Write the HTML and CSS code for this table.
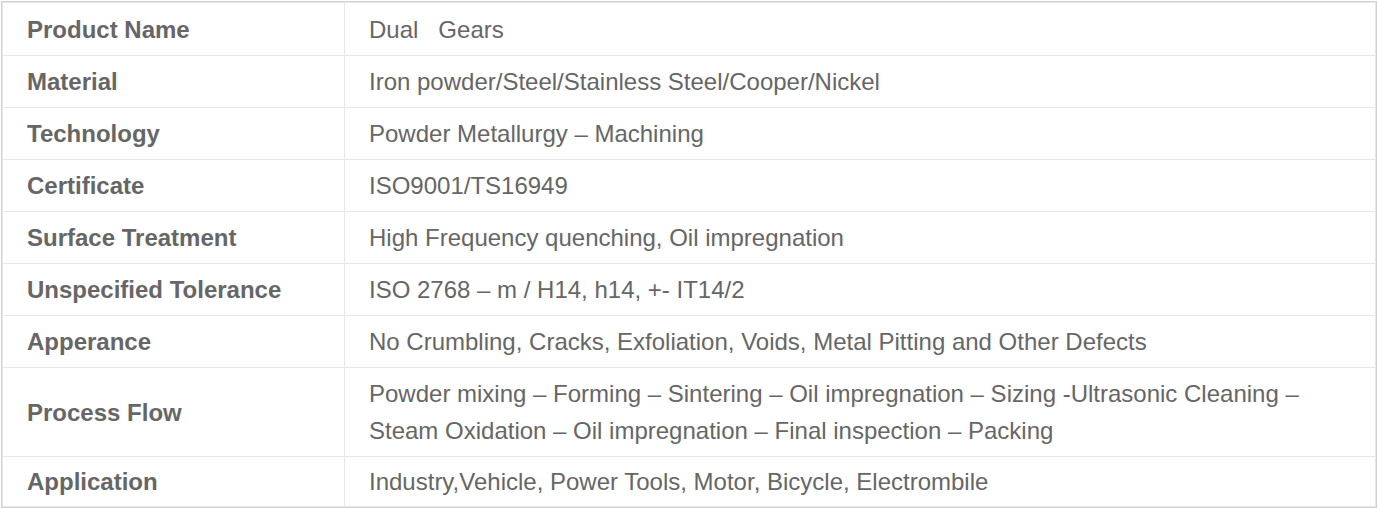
FILE: index.html
```html
<!DOCTYPE html>
<html>
<head>
<meta charset="utf-8">
<link rel="stylesheet" href="styles.css">
</head>
<body>
<div class="wrap">
<table class="spec">
<tr class="first"><td class="k">Product Name</td><td class="v">Dual&nbsp;&nbsp; Gears</td></tr>
<tr><td class="k">Material</td><td class="v">Iron powder/Steel/Stainless Steel/Cooper/Nickel</td></tr>
<tr><td class="k">Technology</td><td class="v">Powder Metallurgy – Machining</td></tr>
<tr><td class="k">Certificate</td><td class="v">ISO9001/TS16949</td></tr>
<tr><td class="k">Surface Treatment</td><td class="v">High Frequency quenching, Oil impregnation</td></tr>
<tr><td class="k">Unspecified Tolerance</td><td class="v">ISO 2768 – m / H14, h14, +- IT14/2</td></tr>
<tr><td class="k">Apperance</td><td class="v">No Crumbling, Cracks, Exfoliation, Voids, Metal Pitting and Other Defects</td></tr>
<tr><td class="k">Process Flow</td><td class="v">Powder mixing – Forming – Sintering – Oil impregnation – Sizing -Ultrasonic Cleaning –<br>Steam Oxidation – Oil impregnation – Final inspection – Packing</td></tr>
<tr class="last"><td class="k">Application</td><td class="v">Industry,Vehicle, Power Tools, Motor, Bicycle, Electrombile</td></tr>
</table>
</div>
</body>
</html>
```
FILE: styles.css
```css
html, body { margin: 0; padding: 0; background: #fff; }
.wrap {
  margin: 1px 0 0 1px;
  border: 1px solid #d0d0d0;
  width: 1374px;
}
.spec {
  width: 100%;
  border-collapse: collapse;
  font-family: "Liberation Sans", Arial, sans-serif;
  font-size: 24px;
  color: #666;
}
.spec td {
  border: 1px solid #e8e8e8;
  padding: 7px 24px;
  line-height: 37px;
  vertical-align: middle;
  text-align: left;
}
.spec .first td { padding-top: 8px; }
.spec .last td { padding-top: 6px; padding-bottom: 6px; }
.spec .k { width: 293px; font-weight: bold; }
```
